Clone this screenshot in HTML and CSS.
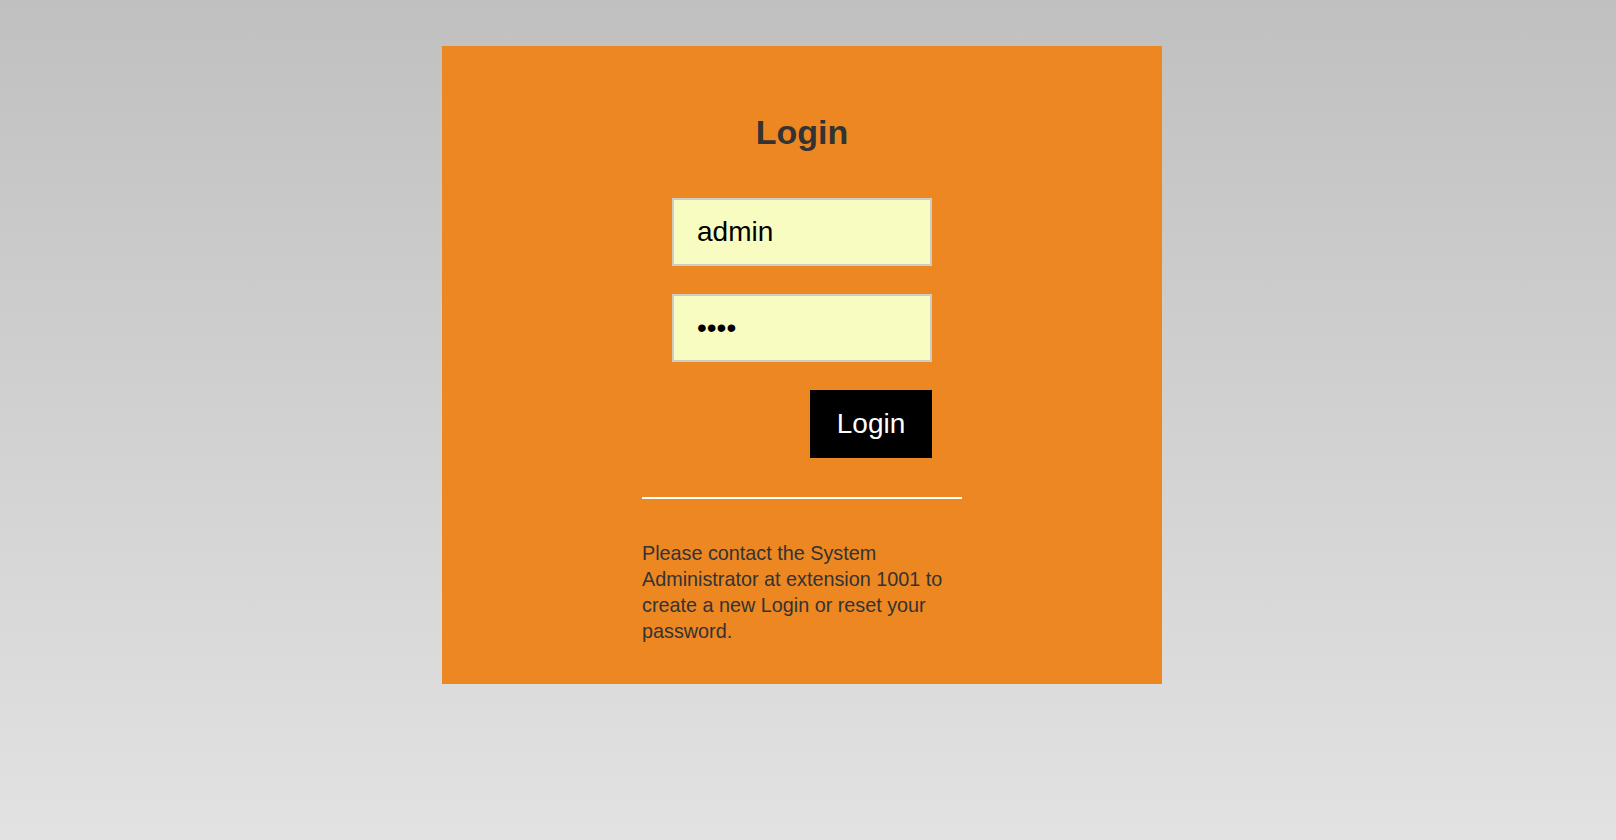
FILE: index.html
```html
<!DOCTYPE html>
<html lang="en">
<head>
<meta charset="utf-8">
<title>Login</title>
<link rel="stylesheet" href="styles.css">
</head>
<body>
<div class="page">
  <main class="card">
    <h1 class="title">Login</h1>
    <form class="form">
      <input class="field" type="text" value="admin">
      <input class="field" type="password" value="1234">
      <button class="btn" type="button">Login</button>
    </form>
    <hr class="rule">
    <p class="note">Please contact the System Administrator at extension 1001 to create a new Login or reset your password.</p>
  </main>
</div>
</body>
</html>
```

FILE: styles.css
```css
html, body {
  margin: 0;
  padding: 0;
}

body {
  min-height: 840px;
  background: linear-gradient(to bottom, #c0c0c0 0%, #e2e2e2 100%);
  font-family: "Liberation Sans", Arial, sans-serif;
}

.page {
  display: flex;
  justify-content: center;
  padding: 46px 12px 0 0;
}

.card {
  box-sizing: border-box;
  width: 720px;
  height: 638px;
  background: #ec8722;
  display: flex;
  flex-direction: column;
  align-items: center;
  padding-top: 67px;
}

.title {
  margin: 0;
  font-size: 34px;
  line-height: 38px;
  font-weight: bold;
  color: #333333;
}

.form {
  margin-top: 47px;
  width: 260px;
  display: flex;
  flex-direction: column;
  gap: 28px;
}

.field {
  box-sizing: border-box;
  width: 260px;
  height: 68px;
  margin: 0;
  padding: 0 23px;
  border: 2px solid #cdcdc4;
  background: #f9fcc1;
  font-family: "Liberation Sans", Arial, sans-serif;
  font-size: 28px;
  color: #000;
  outline: none;
}

.btn {
  align-self: flex-end;
  width: 122px;
  height: 68px;
  margin: 0;
  padding: 0;
  border: 0;
  background: #000;
  color: #fff;
  font-family: "Liberation Sans", Arial, sans-serif;
  font-size: 28px;
  cursor: pointer;
}

.rule {
  width: 320px;
  height: 2px;
  margin: 39px 0 0;
  border: 0;
  background: #ffffff;
}

.note {
  width: 320px;
  margin: 41px 0 0;
  font-size: 19.8px;
  line-height: 26px;
  color: #333333;
}
```
